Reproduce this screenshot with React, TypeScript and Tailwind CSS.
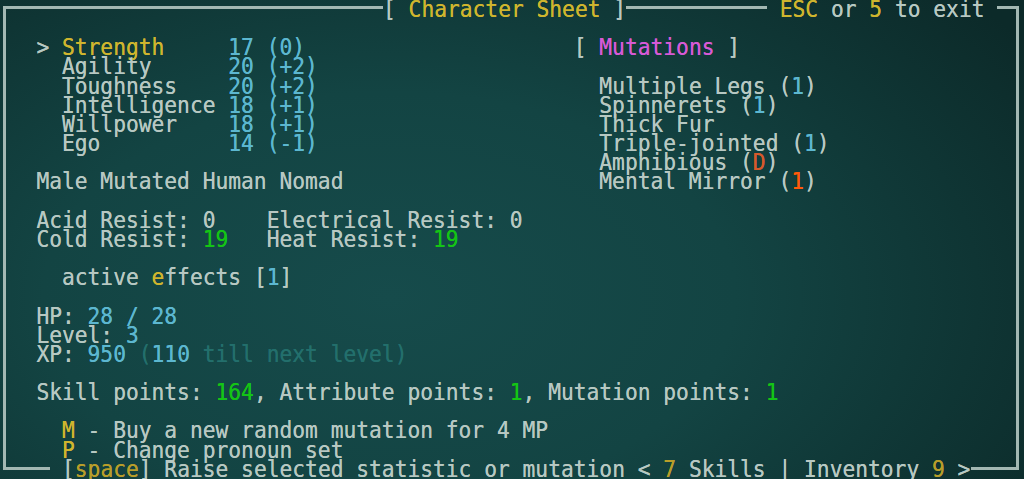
import React from "react";

type Seg = [string, string];

const D = "text-[#b7c8c2]";
const Y = "text-[#cfb52e]";
const CY = "text-[#5cb7d0]";
const G = "text-[#14c416]";
const M = "text-[#d65ad6]";
const OR = "text-[#d65a2c]";
const OR2 = "text-[#ff5a0a]";
const DIM = "text-[#236f6c]";

const len = (s: Seg[]) => s.reduce((a, [t]) => a + t.length, 0);

function row(left: Seg[], right?: Seg[], col = 47): Seg[] {
  if (!right) return left;
  const pad = Math.max(0, col - len(left));
  return [...left, [" ".repeat(pad), D], ...right];
}

const stat = (name: string, val: string, mod: string, sel = false): Seg[] => [
  [sel ? "   > " : "     ", D],
  [name, sel ? Y : D],
  [" ".repeat(13 - name.length), D],
  [val + " " + mod, CY],
];

const rows: Seg[][] = [
  [],
  row(stat("Strength", "17", "(0)", true), [["[ ", D], ["Mutations", M], [" ]", D]], 45),
  stat("Agility", "20", "(+2)"),
  row(stat("Toughness", "20", "(+2)"), [["Multiple Legs (", D], ["1", CY], [")", D]]),
  row(stat("Intelligence", "18", "(+1)"), [["Spinnerets (", D], ["1", CY], [")", D]]),
  row(stat("Willpower", "18", "(+1)"), [["Thick Fur", D]]),
  row(stat("Ego", "14", "(-1)"), [["Triple-jointed (", D], ["1", CY], [")", D]]),
  row([], [["Amphibious (", D], ["D", OR], [")", D]]),
  row([["   Male Mutated Human Nomad", D]], [["Mental Mirror (", D], ["1", OR2], [")", D]]),
  [],
  row([["   Acid Resist: 0", D]], [["Electrical Resist: 0", D]], 21),
  row([["   Cold Resist: ", D], ["19", G]], [["Heat Resist: ", D], ["19", G]], 21),
  [],
  [["     active ", D], ["e", Y], ["ffects [", D], ["1", CY], ["]", D]],
  [],
  [["   HP: ", D], ["28 / 28", CY]],
  [["   Level: ", D], ["3", CY]],
  [["   XP: ", D], ["950", CY], [" ", D], ["(", DIM], ["110", CY], [" till next level)", DIM]],
  [],
  [
    ["   Skill points: ", D],
    ["164", G],
    [", Attribute points: ", D],
    ["1", G],
    [", Mutation points: ", D],
    ["1", G],
  ],
  [],
  [["     ", D], ["M", Y], [" - Buy a new random mutation for 4 MP", D]],
  [["     ", D], ["P", Y], [" - Change pronoun set", D]],
];

function Line({ segs }: { segs: Seg[] }) {
  return (
    <div className="h-[19.16px] whitespace-pre scale-y-[1.07]">
      {segs.map(([t, c], i) => (
        <span key={i} className={c}>
          {t}
        </span>
      ))}
    </div>
  );
}

export default function App() {
  return (
    <div className="w-[1024px] h-[479px] overflow-hidden flex flex-col bg-[radial-gradient(ellipse_75%_95%_at_38%_62%,#164b4b_0%,#134443_45%,#0c2a29_100%)] font-['DejaVu_Sans_Mono','Liberation_Mono',monospace] text-[21.26px] leading-[19.16px] text-[#b7c8c2] [text-shadow:0_0_0.5px_currentColor]">
      {/* top border */}
      <div className="h-[19.16px] flex items-start whitespace-pre shrink-0">
        <div className="ml-[3px] mt-[6px] w-[380px] h-[13.16px] border-t-[3px] border-l-[3px] border-[#a3b8b3]" />
        <div className="w-[243.2px] -translate-y-[1px] scale-y-[1.07]">
          <span className={D}>[ </span>
          <span className={Y}>Character Sheet</span>
          <span className={D}> ]</span>
        </div>
        <div className="mt-[6px] w-[140.8px] h-[3px] bg-[#a3b8b3]" />
        <div className="w-[230.4px] -translate-y-[1px] scale-y-[1.07]">
          <span className={D}> </span>
          <span className={Y}>ESC</span>
          <span className={D}> or </span>
          <span className={Y}>5</span>
          <span className={D}> to exit </span>
        </div>
        <div className="mt-[6px] w-[21.6px] h-[13.16px] border-t-[3px] border-r-[3px] border-[#a3b8b3]" />
      </div>

      {/* middle */}
      <div className="ml-[3px] w-[1016px] h-[440.68px] border-x-[3px] border-[#a3b8b3] shrink-0">
        <div className="-ml-[8px] w-[1024px] -translate-y-[1px]">
          {rows.map((r, i) => (
            <Line key={i} segs={r} />
          ))}
        </div>
      </div>

      {/* bottom border */}
      <div className="h-[19.16px] flex items-start whitespace-pre shrink-0">
        <div className="ml-[3px] w-[47px] h-[10px] border-l-[3px] border-b-[3px] border-[#a3b8b3]" />
        <div className="ml-[12px] w-[908.8px] -translate-y-[1px] scale-y-[1.07]">
          <span className={D}>[</span>
          <span className="text-[#b89e2a]">space</span>
          <span className={D}>] Raise selected statistic or mutation &lt; </span>
          <span className="text-[#b89e2a]">7</span>
          <span className={D}> Skills | Inventory </span>
          <span className="text-[#b89e2a]">9</span>
          <span className={D}> &gt;</span>
        </div>
        <div className="w-[48.2px] h-[10px] border-r-[3px] border-b-[3px] border-[#a3b8b3]" />
      </div>
    </div>
  );
}
